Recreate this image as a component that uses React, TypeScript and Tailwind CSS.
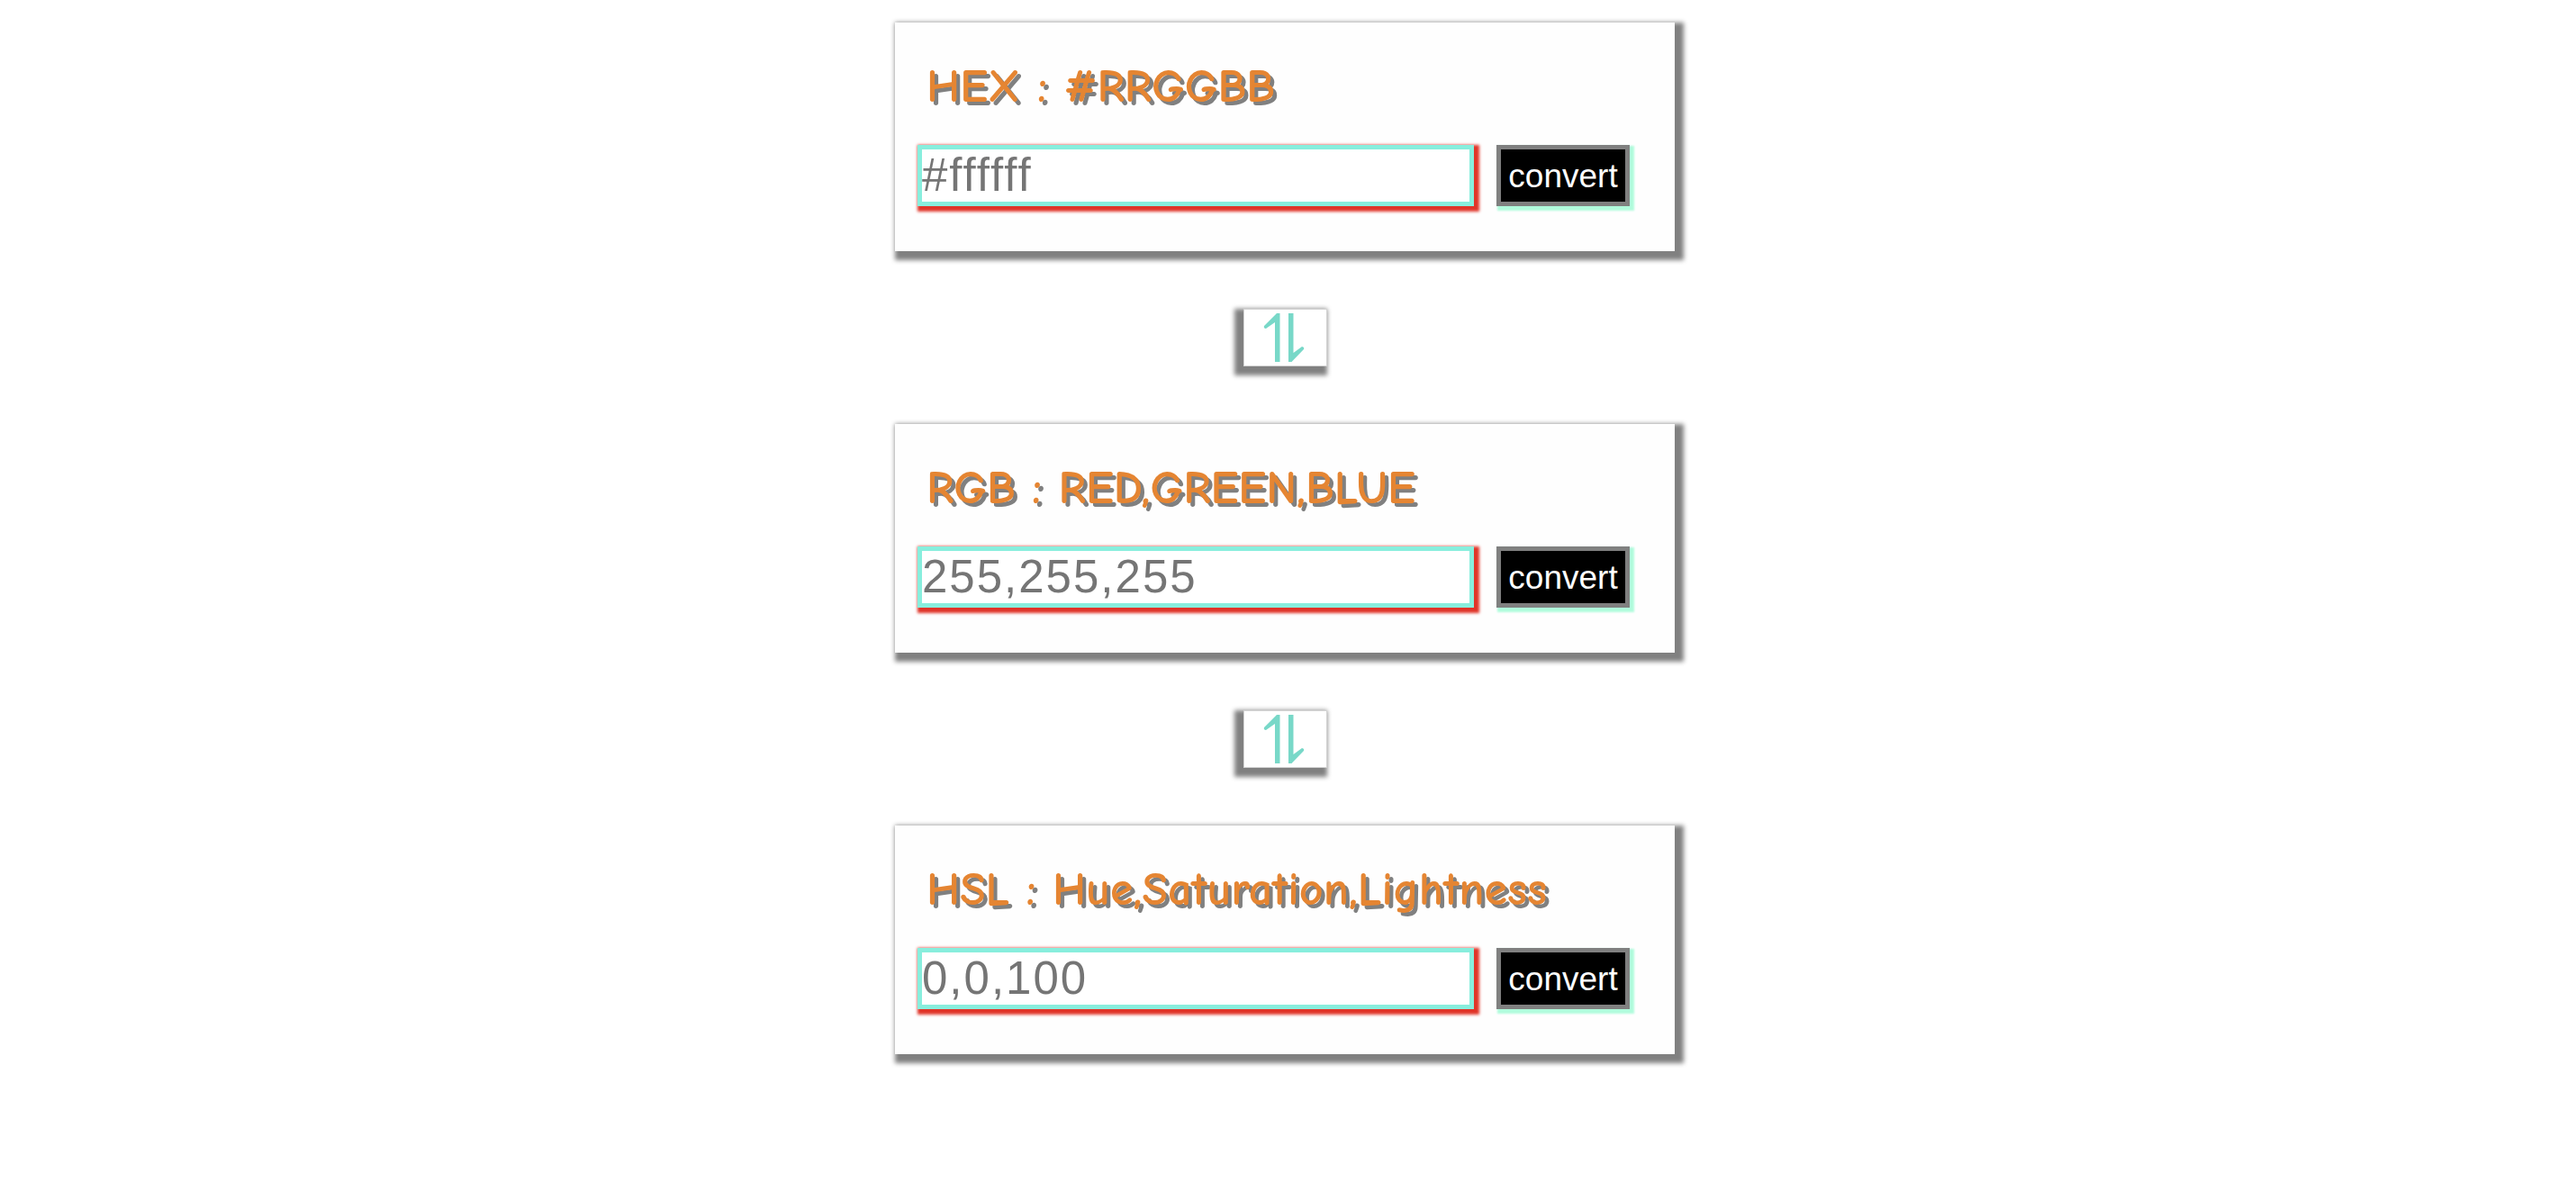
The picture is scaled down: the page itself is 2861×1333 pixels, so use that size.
import React from "react";

type Converter = { id: string; title: string; placeholder: string };

const converters: Converter[] = [
  { id: "hex", title: "HEX : #RRGGBB", placeholder: "#ffffff" },
  { id: "rgb", title: "RGB : RED,GREEN,BLUE", placeholder: "255,255,255" },
  { id: "hsl", title: "HSL : Hue,Saturation,Lightness", placeholder: "0,0,100" },
];

function SwapIcon() {
  return (
    <div className="my-16 flex h-16 w-[93px] items-center justify-center border border-[#d3d3d3] bg-white shadow-[-5px_5px_5px_5px_gray]">
      <svg viewBox="0 0 48 56" className="h-14 w-12" fill="#78d8c8" aria-hidden="true">
        <path d="M15 1h3.5v54H13V11L3 18q-3-.5-2-3z" />
        <path d="M28 1h5.500v44L43 38q3 .5 2 3L31.500 55H28z" />
      </svg>
    </div>
  );
}

function ConverterCard({ id, title, placeholder }: Converter) {
  return (
    <form
      className="w-full max-w-[866px] bg-[#fefefe] pt-9 pr-[50px] pb-[50px] pl-[25px] shadow-[5px_5px_5px_5px_gray]"
      onSubmit={(e) => e.preventDefault()}
    >
      <label
        htmlFor={id}
        className="ml-2.5 block h-[100px] font-['Comic_Sans_MS','Comic_Neue',cursive] text-[52px] leading-[70px] font-bold whitespace-nowrap text-[#e58532] [text-shadow:4px_4px_0px_gray]"
      >
        {title}
      </label>
      <div className="flex gap-[25px]">
        <input
          id={id}
          type="text"
          placeholder={placeholder}
          className="h-[68px] min-w-0 flex-1 border-5 border-[#88eedd] bg-white text-[51px] tracking-[2px] shadow-[3px_3px_3px_3px_#e03428] outline-none placeholder:text-[#757575]"
        />
        <button
          type="submit"
          className="h-[68px] w-[148px] border-5 border-[#808080] bg-black text-[37px] leading-none text-white shadow-[3px_3px_2px_2px_#b0fcdc]"
        >
          convert
        </button>
      </div>
    </form>
  );
}

export default function App() {
  return (
    <main className="flex flex-col items-center bg-white pt-[25px] pr-[7px] pb-10 font-['Liberation_Sans',Arial,sans-serif]">
      {converters.map((converter, index) => (
        <React.Fragment key={converter.id}>
          {index > 0 && <SwapIcon />}
          <ConverterCard {...converter} />
        </React.Fragment>
      ))}
    </main>
  );
}
